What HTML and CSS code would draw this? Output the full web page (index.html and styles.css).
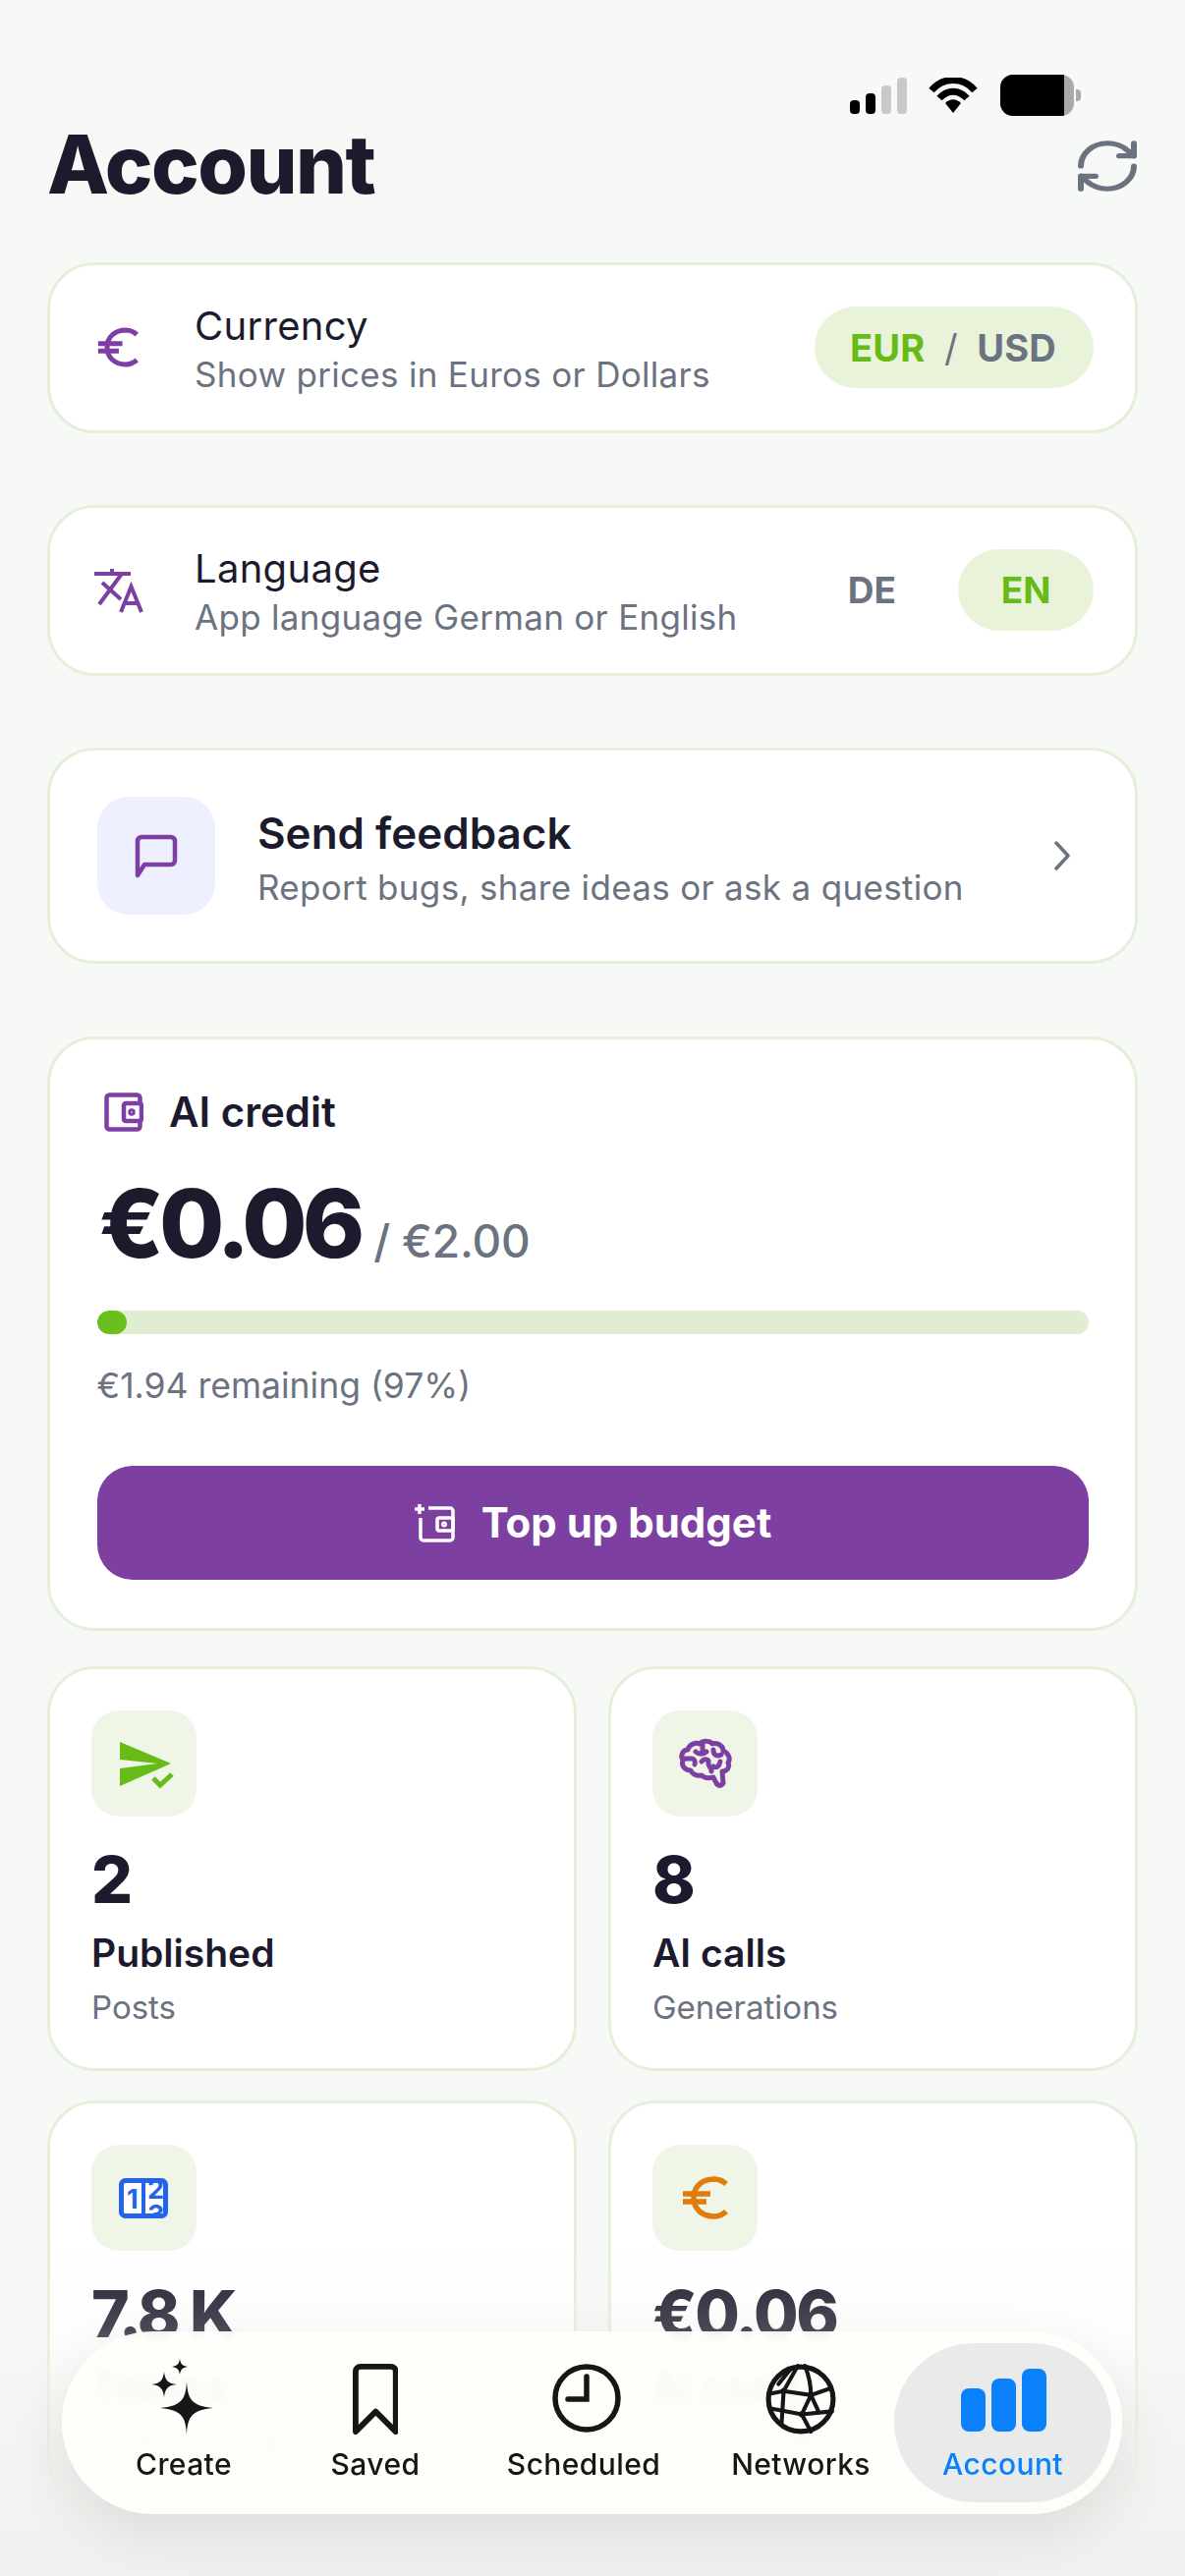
FILE: index.html
```html
<!DOCTYPE html>
<html lang="en">
<head>
    <meta charset="UTF-8">
    <meta name="viewport" content="width=device-width, initial-scale=1.0">
    <title>Account</title>
    <link rel="stylesheet" href="styles.css">
</head>
<body>
    <div class="screen">
        <!-- Status bar -->
        <div class="status-bar">
            <div class="signal">
                <span class="signal-bar on b1"></span>
                <span class="signal-bar on b2"></span>
                <span class="signal-bar b3"></span>
                <span class="signal-bar b4"></span>
            </div>
            <svg class="wifi" viewBox="0 0 50 36">
                <path d="M3 13 C15 -1 35 -1 47 13" fill="none" stroke="#000" stroke-width="7"/>
                <path d="M11 21 C19 12 31 12 39 21" fill="none" stroke="#000" stroke-width="7"/>
                <path d="M17 26 C22 21 28 21 33 26 L25 36 Z" fill="#000"/>
            </svg>
            <div class="battery">
                <div class="battery-body"><span class="battery-level"></span></div>
                <span class="battery-tip"></span>
            </div>
        </div>

        <header class="page-header">
            <h1>Account</h1>
            <svg class="refresh" viewBox="0 0 24 24" preserveAspectRatio="none" fill="none" stroke="#6b7280" stroke-width="2" stroke-linecap="round" stroke-linejoin="round">
                <path d="M3 12a9 9 0 0 1 9-9 9.75 9.75 0 0 1 6.74 2.74L21 8"/>
                <path d="M21 3v5h-5"/>
                <path d="M21 12a9 9 0 0 1-9 9 9.75 9.75 0 0 1-6.74-2.74L3 16"/>
                <path d="M8 16H3v5"/>
            </svg>
        </header>

        <main class="content">
            <section class="card setting">
                <div class="setting-icon">
                    <svg class="euro-small" viewBox="0 0 48 44" fill="none" stroke="#7d3fa3" stroke-width="5.5">
                        <path d="M45 8 A18 18 0 0 0 33 3 C20 3 12 11 12 22 C12 33 20 41 33 41 A18 18 0 0 0 45 36"/>
                        <path d="M2 18 H29 M2 26 H25"/>
                    </svg>
                </div>
                <div class="setting-text">
                    <div class="setting-title">Currency</div>
                    <div class="setting-sub">Show prices in Euros or Dollars</div>
                </div>
                <div class="toggle-pill">
                    <span class="opt-on">EUR</span>
                    <span class="opt-slash">/</span>
                    <span class="opt-off">USD</span>
                </div>
            </section>

            <section class="card setting">
                <div class="setting-icon">
                    <svg class="translate" viewBox="0 0 50 46" fill="none" stroke="#7d3fa3" stroke-width="4">
                        <path d="M0 6 H37 M18 1 V6 M5 37 L28 6 M8 15 L27 32"/>
                        <path d="M27 45 L37.5 19 L48 45 M31 36 H44"/>
                    </svg>
                </div>
                <div class="setting-text">
                    <div class="setting-title">Language</div>
                    <div class="setting-sub">App language German or English</div>
                </div>
                <span class="lang-off">DE</span>
                <span class="lang-on">EN</span>
            </section>

            <section class="card feedback">
                <div class="feedback-icon">
                    <svg viewBox="0 0 44 45" fill="none" stroke="#7d3fa3" stroke-width="4.5" stroke-linejoin="round">
                        <path d="M3 42 V7 a4 4 0 0 1 4-4 H37 a4 4 0 0 1 4 4 V27 a4 4 0 0 1-4 4 H10 Z"/>
                    </svg>
                </div>
                <div class="feedback-text">
                    <div class="feedback-title">Send feedback</div>
                    <div class="feedback-sub">Report bugs, share ideas or ask a question</div>
                </div>
                <svg class="chevron" viewBox="0 0 17 30" fill="none" stroke="#6b7280" stroke-width="3.5" stroke-linecap="round" stroke-linejoin="round">
                    <path d="M3 2 L15 15 L3 28"/>
                </svg>
            </section>

            <section class="card credit">
                <div class="credit-head">
                    <svg class="wallet" viewBox="0 0 40 40" fill="none" stroke="#7d3fa3" stroke-width="4.5">
                        <rect x="2.5" y="2.5" width="34" height="35" rx="3"/>
                        <rect x="20" y="11" width="18" height="18" rx="2" fill="#fff"/>
                        <circle cx="28" cy="20" r="1.5"/>
                    </svg>
                    <span>AI credit</span>
                </div>
                <div class="credit-amount">
                    <span class="amount">€0.06</span>
                    <span class="amount-limit">/ €2.00</span>
                </div>
                <div class="progress"><div class="progress-fill" style="width: 3%"></div></div>
                <div class="remaining">€1.94 remaining (97%)</div>
                <button class="topup">
                    <svg viewBox="0 0 42 40" fill="none" stroke="#fff" stroke-width="3.5">
                        <path d="M1 6 H11 M6 1 V11"/>
                        <path d="M15 5 H37 a3 3 0 0 1 3 3 V35 a3 3 0 0 1-3 3 H10 a3 3 0 0 1-3-3 V15"/>
                        <rect x="24" y="15" width="16" height="13" rx="2"/>
                        <circle cx="31" cy="21.5" r="1.2"/>
                    </svg>
                    <span>Top up budget</span>
                </button>
            </section>

            <section class="stats">
                <div class="card stat">
                    <div class="stat-icon">
                        <svg viewBox="0 0 60 60">
                            <polygon points="5,8 57,30 5,53 5,35 43,30 5,26" fill="#66bb17"/>
                            <polyline points="39,45 46,52 58,41" fill="none" stroke="#66bb17" stroke-width="5"/>
                        </svg>
                    </div>
                    <div class="stat-value">2</div>
                    <div class="stat-label">Published</div>
                    <div class="stat-sub">Posts</div>
                </div>
                <div class="card stat">
                    <div class="stat-icon">
                        <svg viewBox="0 0 60 60" fill="none" stroke="#7d3fa3" stroke-width="5" stroke-linecap="round" stroke-linejoin="round">
                            <path d="M26 42 C20 43 16 40 15 37 C9 37 5 32 7 27 C4 22 7 16 12 16 C13 11 20 8 24 10 C28 6 35 7 37 10 C42 8 48 12 48 17 C53 19 56 25 53 29 C55 34 52 38 47 38 L48 50 C46 53 43 53 41 50 L38 44 C34 45 29 45 26 42 Z"/>
                            <path d="M8 25 H16 C18 25 20 27 19 31 M27 10 V18 M20 18 C23 21 28 21 31 18 M38 16 C38 22 42 23 46 21 M26 28 C29 24 34 26 33 29 C32 33 37 35 36 38 M45 28 C44 33 41 35 38 33"/>
                        </svg>
                    </div>
                    <div class="stat-value">8</div>
                    <div class="stat-label">AI calls</div>
                    <div class="stat-sub">Generations</div>
                </div>
                <div class="card stat">
                    <div class="stat-icon">
                        <svg viewBox="0 0 60 60">
                            <defs>
                                <clipPath id="digit-window"><rect x="31" y="15" width="21" height="31"/></clipPath>
                            </defs>
                            <rect x="6.5" y="12.5" width="45" height="36" rx="4" fill="#fff" stroke="#2563eb" stroke-width="5"/>
                            <path d="M29 13 V48" stroke="#2563eb" stroke-width="4"/>
                            <text class="digit" x="12" y="41" fill="#2563eb">1</text>
                            <g clip-path="url(#digit-window)">
                                <text class="digit" x="33" y="31" fill="#2563eb">2</text>
                                <text class="digit" x="33" y="57" fill="#2563eb">3</text>
                            </g>
                        </svg>
                    </div>
                    <div class="stat-value">7.8 K</div>
                    <div class="stat-label">Tokens</div>
                    <div class="stat-sub">Used in total</div>
                </div>
                <div class="card stat">
                    <div class="stat-icon">
                        <svg class="euro-stat" viewBox="0 0 48 44" fill="none" stroke="#e07b0c" stroke-width="5.5">
                            <path d="M45 8 A18 18 0 0 0 33 3 C20 3 12 11 12 22 C12 33 20 41 33 41 A18 18 0 0 0 45 36"/>
                            <path d="M1 18 H29 M1 26 H25"/>
                        </svg>
                    </div>
                    <div class="stat-value">€0.06</div>
                    <div class="stat-label">AI costs</div>
                    <div class="stat-sub">This month</div>
                </div>
            </section>
        </main>

        <div class="bottom-fade"></div>

        <!-- Tab bar -->
        <nav class="tabbar">
            <div class="tab">
                <svg class="tab-icon sparkles" viewBox="0 0 74 79" fill="#161616">
                    <path d="M40 24 C41 42 45 49 67 51 C45 53 41 60 40 78 C39 60 35 53 13 51 C35 49 39 42 40 24 Z"/>
                    <path d="M17 14 C18 22 20 26 30 27 C20 28 18 32 17 40 C16 32 14 28 4 27 C14 26 16 22 17 14 Z"/>
                    <path d="M33 1 C34 6 35 8 41 9 C35 10 34 12 33 17 C32 12 31 10 25 9 C31 8 32 6 33 1 Z"/>
                </svg>
                <span>Create</span>
            </div>
            <div class="tab">
                <svg class="tab-icon" viewBox="0 0 48 74" fill="none" stroke="#161616" stroke-width="6" stroke-linejoin="round">
                    <path d="M3 71 V8 a5 5 0 0 1 5-5 H40 a5 5 0 0 1 5 5 V71 L24 50 Z"/>
                </svg>
                <span>Saved</span>
            </div>
            <div class="tab">
                <svg class="tab-icon clock" viewBox="0 0 70 70" fill="none" stroke="#161616" stroke-width="5.5" stroke-linecap="round">
                    <circle cx="35" cy="35" r="32"/>
                    <path d="M35 13 V36 H16"/>
                </svg>
                <span>Scheduled</span>
            </div>
            <div class="tab">
                <svg class="tab-icon" viewBox="0 0 70 70" fill="none" stroke="#161616" stroke-width="4" stroke-linecap="round">
                    <circle cx="35" cy="35" r="32" stroke-width="5"/>
                    <path d="M3 30 L18 27 L45 31 L65 24 M4 44 L36 50 L66 47"/>
                    <path d="M32 2 L18 27 L16 59 M39 2 C44 14 45 22 45 31 L36 50 L45 67 M25 5 L13 20 M45 31 L52 46"/>
                    <circle cx="18" cy="27" r="3" fill="#161616" stroke="none"/>
                    <circle cx="45" cy="31" r="3" fill="#161616" stroke="none"/>
                    <circle cx="36" cy="50" r="3" fill="#161616" stroke="none"/>
                </svg>
                <span>Networks</span>
            </div>
            <div class="tab active">
                <div class="bars">
                    <span class="bar bar-low"></span>
                    <span class="bar bar-mid"></span>
                    <span class="bar bar-high"></span>
                </div>
                <span>Account</span>
            </div>
        </nav>
    </div>
</body>
</html>
```

FILE: styles.css
```css
:root {
    --ink: #1c1b2e;
    --muted: #6b7280;
    --purple: #7d3fa0;
    --green: #66bb17;
    --line: #e6efd9;
    --blue: #0a80fa;
}

* {
    margin: 0;
    padding: 0;
    box-sizing: border-box;
    font-family: Inter, 'Liberation Sans', sans-serif;
}

body {
    background: #f6f9f5;
}

.screen {
    position: relative;
    height: 2622px;
    overflow: hidden;
    padding: 76px 48px 0;
}

/* Status bar */
.status-bar {
    display: flex;
    justify-content: flex-end;
    align-items: center;
    height: 42px;
    margin-right: 58px;
}

.signal {
    display: flex;
    align-items: flex-end;
    gap: 6px;
    height: 37px;
    margin-right: 22px;
}

.signal-bar {
    width: 10px;
    border-radius: 4px;
    background: #c9cac7;
}

.signal-bar.on { background: #000; }
.b1 { height: 14px; }
.b2 { height: 21px; }
.b3 { height: 29px; }
.b4 { height: 37px; }

.wifi {
    width: 50px;
    height: 36px;
    margin-right: 23px;
}

.battery {
    display: flex;
    align-items: center;
}

.battery-body {
    width: 75px;
    height: 42px;
    border-radius: 13px;
    overflow: hidden;
    background: #a9a9a9;
}

.battery-level {
    display: block;
    width: 65px;
    height: 100%;
    background: #000;
}

.battery-tip {
    width: 5px;
    height: 12px;
    margin-left: 2px;
    border-radius: 0 4px 4px 0;
    background: #a9a9a9;
}

/* Header */
.page-header {
    display: flex;
    justify-content: space-between;
    align-items: center;
    height: 100px;
    margin-bottom: 49px;
}

.page-header h1 {
    font-size: 82px;
    font-weight: 800;
    line-height: 100px;
    letter-spacing: -1.6px;
    color: var(--ink);
}

.refresh {
    width: 72px;
    height: 62px;
    margin-right: -5px;
    margin-top: 2px;
}

.content {
    display: flex;
    flex-direction: column;
    gap: 73.5px;
}

.card {
    background: #fff;
    border: 3px solid var(--line);
    border-radius: 48px;
}

/* Currency + language rows */
.setting {
    display: flex;
    align-items: center;
    height: 173.5px;
    padding: 0 42px 0 45px;
}

.setting-icon {
    display: flex;
    width: 102px;
    flex-shrink: 0;
}

.euro-small {
    width: 44px;
    height: 41px;
    margin-left: 2px;
}

.translate {
    width: 50px;
    height: 46px;
}

.setting-text {
    flex: 1;
    margin-top: 6px;
}

.setting-title {
    font-size: 40px;
    letter-spacing: 0.3px;
    line-height: 48px;
    color: var(--ink);
}

.setting-sub {
    font-size: 35px;
    letter-spacing: 0.3px;
    line-height: 50px;
    color: var(--muted);
}

.toggle-pill {
    display: flex;
    align-items: center;
    justify-content: space-between;
    width: 284px;
    height: 83px;
    padding: 0 38px 0 36px;
    border-radius: 42px;
    background: #e9f3da;
    font-size: 38px;
    font-weight: 700;
    letter-spacing: 0.2px;
}

.opt-on { color: var(--green); }
.opt-off { color: var(--muted); }

.opt-slash {
    color: var(--muted);
    font-weight: 400;
}

.lang-off {
    font-size: 37px;
    font-weight: 700;
    color: var(--muted);
    margin-right: 63px;
}

.lang-on {
    display: flex;
    align-items: center;
    justify-content: center;
    width: 138px;
    height: 83px;
    border-radius: 42px;
    background: #e9f3da;
    font-size: 37px;
    font-weight: 700;
    color: var(--green);
}

/* Feedback */
.feedback {
    display: flex;
    align-items: center;
    height: 220px;
    padding: 0 66px 0 48px;
}

.feedback-icon {
    display: flex;
    align-items: center;
    justify-content: center;
    width: 120px;
    height: 120px;
    border-radius: 32px;
    background: #eef0ff;
    flex-shrink: 0;
    margin-right: 43px;
}

.feedback-icon svg {
    width: 44px;
    height: 45px;
}

.feedback-text {
    flex: 1;
    margin-top: 4px;
}

.feedback-title {
    font-size: 44px;
    font-weight: 600;
    line-height: 58px;
    color: var(--ink);
}

.feedback-sub {
    margin-top: 2px;
    font-size: 35px;
    letter-spacing: 0.32px;
    line-height: 48px;
    color: var(--muted);
}

.chevron {
    width: 17px;
    height: 30px;
}

/* AI credit */
.credit {
    height: 605px;
    padding: 39px 47.5px 0;
}

.credit-head {
    display: flex;
    align-items: center;
    gap: 26px;
    height: 70px;
    padding-left: 7.5px;
    font-size: 42px;
    font-weight: 600;
    color: var(--ink);
}

.wallet {
    width: 40px;
    height: 40px;
}

.credit-amount {
    display: flex;
    align-items: baseline;
    gap: 14px;
    height: 116px;
    margin-top: 20px;
    padding-left: 2px;
}

.amount {
    font-size: 96px;
    font-weight: 800;
    line-height: 116px;
    letter-spacing: -5px;
    color: var(--ink);
}

.amount-limit {
    font-size: 46px;
    font-weight: 500;
    letter-spacing: -0.2px;
    color: var(--muted);
}

.progress {
    height: 24px;
    margin-top: 31px;
    border-radius: 12px;
    background: #e1edd0;
    overflow: hidden;
}

.progress-fill {
    height: 100%;
    border-radius: 12px;
    background: #6abf1c;
}

.remaining {
    margin-top: 28px;
    font-size: 35.5px;
    line-height: 50px;
    color: var(--muted);
}

.topup {
    display: flex;
    align-items: center;
    justify-content: center;
    gap: 27px;
    width: 100%;
    height: 116px;
    margin-top: 56px;
    border: none;
    border-radius: 36px;
    background: var(--purple);
    color: #fff;
    font-size: 42px;
    font-weight: 700;
}

.topup svg {
    width: 42px;
    height: 40px;
}

/* Stats */
.stats {
    display: grid;
    grid-template-columns: 1fr 1fr;
    column-gap: 32px;
    row-gap: 30px;
    margin-top: -37.5px;
}

.stat {
    height: 412px;
    padding: 42px 42px 0;
}

.stat-icon {
    display: flex;
    align-items: center;
    justify-content: center;
    width: 107px;
    height: 108px;
    border-radius: 28px;
    background: #eff6e8;
}

.stat-icon svg {
    width: 60px;
    height: 60px;
}

.stat-icon .euro-stat {
    width: 48px;
    height: 44px;
}

.digit {
    font-size: 27px;
    font-weight: 700;
}

.stat-value {
    margin-top: 24px;
    font-size: 66px;
    font-weight: 800;
    letter-spacing: -2.5px;
    line-height: 80px;
    color: var(--ink);
}

.stat-label {
    margin-top: 11px;
    font-size: 39px;
    font-weight: 600;
    line-height: 48px;
    color: var(--ink);
}

.stat-sub {
    margin-top: 7px;
    font-size: 33px;
    line-height: 48px;
    color: var(--muted);
}

/* Fade under the tab bar */
.bottom-fade {
    position: absolute;
    left: 0;
    right: 0;
    bottom: 0;
    height: 340px;
    background: linear-gradient(to bottom, rgba(244, 246, 243, 0) 0%, rgba(244, 246, 243, 0.2) 25%, rgba(240, 243, 239, 0.9) 70%, rgba(238, 241, 237, 0.95) 100%);
}

/* Tab bar */
.tabbar {
    position: absolute;
    left: 63px;
    top: 2373px;
    display: grid;
    grid-template-columns: 218px 172px 252px 190px 221px;
    width: 1079px;
    height: 186px;
    padding: 12px 11px 12px 15px;
    border-radius: 93px;
    background: rgba(254, 254, 251, 0.93);
    backdrop-filter: blur(5px);
    box-shadow: 0 20px 60px rgba(0, 0, 0, 0.09);
}

.tab {
    display: flex;
    flex-direction: column;
    align-items: center;
    justify-content: flex-end;
    padding-bottom: 20px;
    font-size: 30px;
    font-weight: 500;
    letter-spacing: 0.4px;
    line-height: 38px;
    color: #161616;
}

.tab-icon {
    height: 72px;
    margin-bottom: 11px;
}

.tab-icon.sparkles {
    height: 79px;
    margin-bottom: 10px;
}

.tab-icon.clock {
    height: 70px;
    margin-left: 6px;
    margin-bottom: 13px;
}

.tab.active {
    border-radius: 81px;
    background: #e9eaea;
    color: var(--blue);
}

.bars {
    display: flex;
    align-items: flex-end;
    gap: 6px;
    height: 64px;
    margin-left: 2px;
    margin-bottom: 14px;
}

.bar {
    width: 25px;
    border-radius: 8px;
    background: var(--blue);
}

.bar-low { height: 44px; }
.bar-mid { height: 54px; }
.bar-high { height: 64px; }
```
